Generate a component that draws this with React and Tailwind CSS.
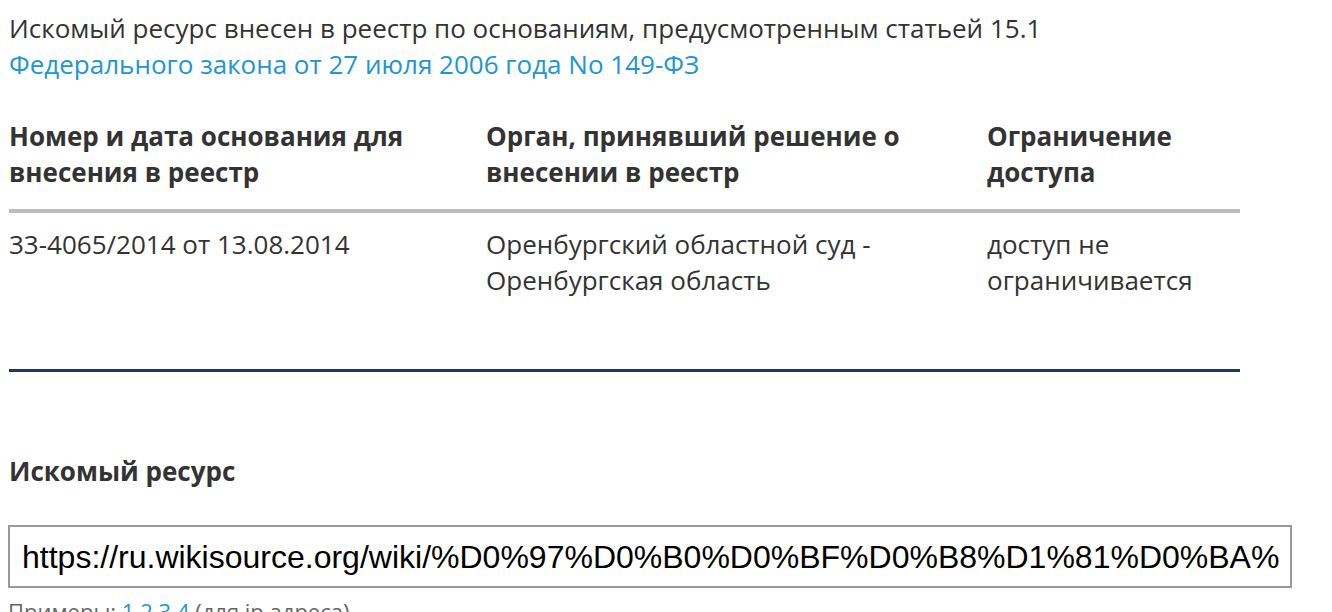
export default function App() {
  return (
    <div className="bg-white w-[1332px] h-[612px] overflow-hidden text-[#333] text-[26px] leading-[36px]" style={{ fontFamily: '"Open Sans", sans-serif' }}>
      <div className="pl-[9px] w-[1240px]">
        <p className="pt-[10px]">
          Искомый ресурс внесен в реестр по основаниям, предусмотренным статьей 15.1
          <br />
          <a className="text-[#2196d3]">Федерального закона от 27 июля 2006 года No 149-ФЗ</a>
        </p>
        <table className="mt-[36px] w-full border-collapse text-left">
          <thead>
            <tr className="border-b-4 border-[#bdbdbd]">
              <th className="w-[477px] align-top font-bold pb-[19px] pr-4">Номер и дата основания для внесения в реестр</th>
              <th className="w-[501px] align-top font-bold pb-[19px] pr-4">Орган, принявший решение о внесении в реестр</th>
              <th className="align-top font-bold pb-[19px] pr-4">Ограничение доступа</th>
            </tr>
          </thead>
          <tbody>
            <tr>
              <td className="align-top pt-[13px] pr-4">33-4065/2014 от 13.08.2014</td>
              <td className="align-top pt-[13px] pr-4">Оренбургский областной суд - Оренбургская область</td>
              <td className="align-top pt-[13px] pr-4">доступ не ограничивается</td>
            </tr>
          </tbody>
        </table>
        <div className="mt-[71px] h-[3px] bg-[#1c3466]" />
        <h3 className="mt-[81px] font-bold">Искомый ресурс</h3>
      </div>
      <div className="pl-[8px] mt-[36px]">
        <div className="w-[1284px] h-[63px] border-2 border-[#999] flex items-center pl-[12px] pr-[10px] text-black text-[32px]" style={{ fontFamily: '"Liberation Sans", Arial, sans-serif' }}>
          <div className="flex-1 overflow-hidden whitespace-nowrap">
            https://ru.wikisource.org/wiki/%D0%97%D0%B0%D0%BF%D0%B8%D1%81%D0%BA%D0%B8
          </div>
        </div>
        <p className="mt-[8px] text-[22px] leading-[30px] text-[#666]">
          Примеры: <a className="text-[#2196d3]">1.2.3.4</a> (для ip адреса)
        </p>
      </div>
    </div>
  );
}
